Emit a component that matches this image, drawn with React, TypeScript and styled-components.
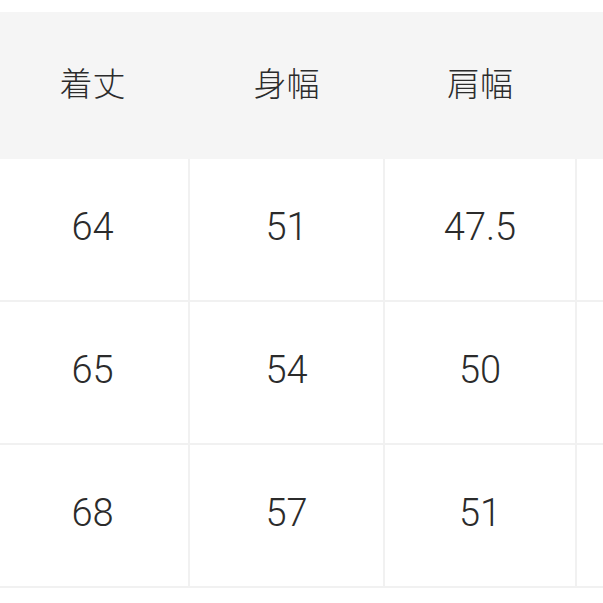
import React from "react";
import styled, { createGlobalStyle } from "styled-components";

const Global = createGlobalStyle`
  html, body {
    margin: 0;
    padding: 0;
    background: #ffffff;
    overflow: hidden;
  }
  body {
    font-family: "Noto Sans CJK JP", "Noto Sans", sans-serif;
    color: #333333;
  }
`;

const Page = styled.div`
  width: 603px;
  height: 603px;
  overflow: hidden;
  padding-top: 12px;
  box-sizing: border-box;
  background: #ffffff;
`;

const Table = styled.div`
  margin-left: -3px;
  width: max-content;
  display: flex;
  flex-direction: column;
`;

const cols = "191px 193px 190px 191px";

const HeaderRow = styled.div`
  display: grid;
  grid-template-columns: ${cols};
  column-gap: 2px;
  height: 147px;
  background: #f5f5f5;
`;

const HeaderCell = styled.div`
  display: flex;
  align-items: center;
  justify-content: center;
  font-family: "Noto Sans CJK JP", "Noto Sans CJK SC", sans-serif;
  font-size: 33px;
  font-weight: 300;
  color: #2b2b2b;
  padding-bottom: 8px;
`;

const Body = styled.div`
  display: grid;
  grid-template-columns: ${cols};
  grid-auto-rows: 141px;
  gap: 2px;
  padding-bottom: 2px;
  background: #f1f1f1;
`;

const Cell = styled.div`
  display: flex;
  align-items: center;
  justify-content: center;
  background: #ffffff;
  font-family: Roboto, "Liberation Sans", sans-serif;
  font-weight: 300;
  font-size: 38px;
  color: #2b2b2b;
  padding-bottom: 5px;
`;

const headers = ["着丈", "身幅", "肩幅", ""];
const rows = [
  ["64", "51", "47.5", ""],
  ["65", "54", "50", ""],
  ["68", "57", "51", ""],
];

export default function App() {
  return (
    <>
      <Global />
      <Page>
        <Table>
          <HeaderRow>
            {headers.map((h, i) => (
              <HeaderCell key={i}>{h}</HeaderCell>
            ))}
          </HeaderRow>
          <Body>
            {rows.map((r, i) =>
              r.map((v, j) => <Cell key={`${i}-${j}`}>{v}</Cell>)
            )}
          </Body>
        </Table>
      </Page>
    </>
  );
}
